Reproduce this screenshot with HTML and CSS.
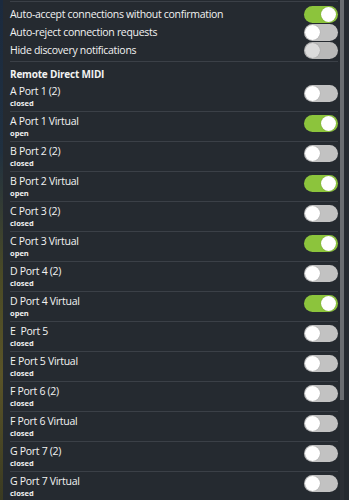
FILE: index.html
```html
<!DOCTYPE html>
<html>
<head>
<meta charset="utf-8">
<link rel="stylesheet" href="styles.css">
</head>
<body>
<div class="desk"></div>
<div class="panel">
  <div class="content">
    <div class="settings">
      <div class="srow"><span>Auto-accept connections without confirmation</span><span class="tog on"></span></div>
      <div class="srow"><span>Auto-reject connection requests</span><span class="tog"></span></div>
      <div class="srow"><span>Hide discovery notifications</span><span class="tog dis"></span></div>
    </div>
    <div class="section">
      <div class="head">Remote Direct MIDI</div>
      <div class="prow"><div class="lbl"><div class="t">A Port 1 (2)</div><div class="s">closed</div></div><span class="tog"></span></div>
      <div class="prow"><div class="lbl"><div class="t">A Port 1 Virtual</div><div class="s">open</div></div><span class="tog on"></span></div>
      <div class="prow"><div class="lbl"><div class="t">B Port 2 (2)</div><div class="s">closed</div></div><span class="tog"></span></div>
      <div class="prow"><div class="lbl"><div class="t">B Port 2 Virtual</div><div class="s">open</div></div><span class="tog on"></span></div>
      <div class="prow"><div class="lbl"><div class="t">C Port 3 (2)</div><div class="s">closed</div></div><span class="tog"></span></div>
      <div class="prow"><div class="lbl"><div class="t">C Port 3 Virtual</div><div class="s">open</div></div><span class="tog on"></span></div>
      <div class="prow"><div class="lbl"><div class="t">D Port 4 (2)</div><div class="s">closed</div></div><span class="tog"></span></div>
      <div class="prow"><div class="lbl"><div class="t">D Port 4 Virtual</div><div class="s">open</div></div><span class="tog on"></span></div>
      <div class="prow"><div class="lbl"><div class="t">E&nbsp; Port 5</div><div class="s">closed</div></div><span class="tog"></span></div>
      <div class="prow"><div class="lbl"><div class="t">E Port 5 Virtual</div><div class="s">closed</div></div><span class="tog"></span></div>
      <div class="prow"><div class="lbl"><div class="t">F Port 6 (2)</div><div class="s">closed</div></div><span class="tog"></span></div>
      <div class="prow"><div class="lbl"><div class="t">F Port 6 Virtual</div><div class="s">closed</div></div><span class="tog"></span></div>
      <div class="prow"><div class="lbl"><div class="t">G Port 7 (2)</div><div class="s">closed</div></div><span class="tog"></span></div>
      <div class="prow"><div class="lbl"><div class="t">G Port 7 Virtual</div><div class="s">closed</div></div><span class="tog"></span></div>
    </div>
  </div>
  <div class="scroll"><div class="thumb"></div></div>
</div>
</body>
</html>
```
FILE: styles.css
```css
html, body {
  margin: 0;
  padding: 0;
  height: 500px;
  overflow: hidden;
}
body {
  display: flex;
  background: #252a30;
  font-family: "Open Sans", sans-serif;
  color: #f2f2f2;
}
.desk {
  width: 3px;
  flex: none;
  background: linear-gradient(#1b2a3e 0%, #203040 30%, #4a4a26 55%, #5a5428 75%, #3a3a22 100%);
}
.panel {
  flex: 1;
  display: flex;
  background: #252a30;
}
.content {
  flex: 1;
  padding: 0 0 0 7px;
}
.settings {
  margin-top: 1px;
  border-top: 1px solid #3b4047;
  border-bottom: 1px solid #3b4047;
  padding: 3px 0 2px;
}
.srow {
  display: flex;
  justify-content: space-between;
  align-items: center;
  height: 18px;
  font-size: 10.5px;
  letter-spacing: -0.3px;
}
.section {
  padding-top: 5px;
}
.head {
  font-weight: bold;
  font-size: 10px;
  letter-spacing: -0.2px;
  line-height: 14px;
  height: 15px;
}
.prow {
  display: flex;
  justify-content: space-between;
  align-items: flex-start;
  height: 29px;
  border-bottom: 1px solid #3b4047;
}
.lbl .t {
  font-size: 10.5px;
  letter-spacing: -0.3px;
  line-height: 14px;
  padding-top: 2px;
}
.lbl .s {
  font-size: 7.5px;
  font-weight: bold;
  line-height: 10px;
}
.tog {
  position: relative;
  width: 34px;
  height: 17px;
  border-radius: 9px;
  background: #c2c2c2;
  flex: none;
}
.prow .tog {
  margin-top: 3px;
}
.tog::after {
  content: "";
  position: absolute;
  top: 1px;
  left: 1px;
  width: 15px;
  height: 15px;
  border-radius: 50%;
  background: #ffffff;
  box-shadow: 0 0 1px rgba(0,0,0,0.3);
}
.tog.on {
  background: #8cc43c;
}
.tog.on::after {
  left: auto;
  right: 2px;
}
.tog.dis {
  background: #b9b9b9;
}
.tog.dis::after {
  background: #dcdcdc;
}
.scroll {
  width: 4px;
  margin: 0 5px 0 2px;
  background: #2b2f35;
  flex: none;
  display: flex;
  flex-direction: column;
}
.thumb {
  height: 400px;
  background: #6a6d71;
}
```
